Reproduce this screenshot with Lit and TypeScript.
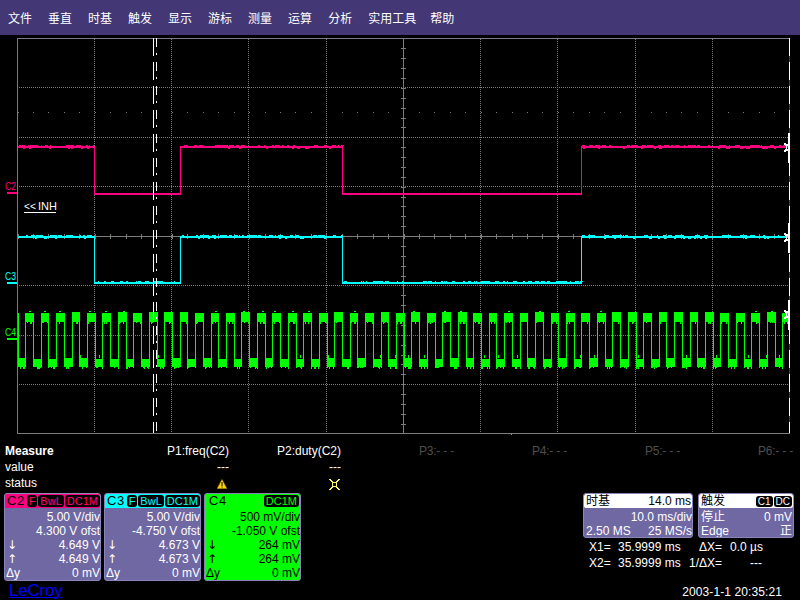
import { LitElement, html, css, svg } from 'lit';
import { customElement } from 'lit/decorators.js';

const X0 = 17.5;
const X1 = 789.5;
const Y0 = 38.5;
const Y1 = 433.5;
const CX = 403.5;
const CY = 236.5;
const VERT = [94.5, 171.5, 248.5, 326.5, 480.5, 557.5, 635.5, 712.5];
const HORZ = [87.5, 137.5, 186.5, 285.5, 335.5, 384.5];
const EDGES = [94, 180, 342, 581];

// small seeded generator so the trace noise stays the same on every load
let seed = 7;
const rnd = () => {
  seed = (seed * 16807) % 2147483647;
  return seed / 2147483647;
};

// thin steps between the levels
const steps = (high: number, low: number) => {
  let d = '';
  let from = high;
  for (const x of EDGES) {
    const to = from === high ? low : high;
    d += `M${x + 0.5} ${from}V${to}`;
    from = to;
  }
  return d;
};

// the flat parts are two pixels thick
const flats = (high: number, low: number) => {
  let d = '';
  let x = 18;
  let level = high;
  for (const e of [...EDGES, 789]) {
    d += `M${x} ${level}H${e + 1}`;
    x = e;
    level = level === high ? low : high;
  }
  return d;
};

const levelAt = (x: number) => {
  let n = 0;
  for (const e of EDGES) if (x >= e) n++;
  return n % 2 === 0;
};

// flecks along the trace: above and below on high, optional on low
const noise = (high: number, low: number, lowToo: boolean) => {
  let d = '';
  for (let x = 19; x < 786; x += 1) {
    const isHigh = levelAt(x);
    if (!isHigh && !lowToo) continue;
    const y = isHigh ? high : low;
    const r = rnd();
    if (r < 0.2) {
      const w = 1 + Math.floor(rnd() * 4);
      d += `M${x} ${y - 2}h${w}v1h${-w}z`;
    } else if (r < 0.27 && isHigh) {
      d += `M${x} ${y + 1}h2v1h-2z`;
    }
  }
  return d;
};

const digital = () => {
  const period = 15.45;
  let line = 'M18.5 313V366';
  let fill = '';
  for (let i = 0; i < 50; i++) {
    const lowX = 17.5 + i * period;
    if (lowX > 788) break;
    const x = Math.round(lowX);
    const hx = Math.round(lowX + 7.7);
    const nx = Math.round(lowX + period);
    const lowTop = 358 + Math.round(rnd() * 1.1);
    const highTop = 312 + Math.round(rnd() * 1.1);
    const lw = Math.min(hx + 1 - x, 789 - x);
    fill += `M${x} ${lowTop}h${lw}v${367 - lowTop}h${-lw}z`;
    for (let k = 0; k < 4; k++) {
      const sx = x + Math.floor(rnd() * lw);
      fill += `M${sx} 367h1v${1 + Math.floor(rnd() * 2)}h-1z`;
    }
    if (rnd() < 0.6) fill += `M${x + Math.floor(rnd() * lw)} 355h1v3h-1z`;
    if (hx < 788) {
      const w = Math.min(nx + 1 - hx, 789 - hx);
      line += `M${hx + 0.5} 320V360`;
      if (nx < 789) line += `M${nx + 0.5} 320V360`;
      fill += `M${hx} ${highTop}h${w}v${322 - highTop}h${-w}z`;
      for (let k = 0; k < 3; k++) {
        const sx = hx + Math.floor(rnd() * w);
        fill += `M${sx} 322h1v${1 + Math.floor(rnd() * 2)}h-1z`;
      }
      if (rnd() < 0.6) fill += `M${hx + 2 + Math.floor(rnd() * 4)} 311h2v1h-2z`;
    }
  }
  return { line, fill };
};

const c4 = digital();
const c2Noise = noise(147, 194, false);
const c3Noise = noise(237, 283, true);

const range = (from: number, to: number) => {
  const out: number[] = [];
  for (let v = from; v <= to; v += 1) out.push(v);
  return out;
};

const tickX = range(0, 49).map((i) => Math.round(X0 + i * 15.44) + 0.5);
const tickY = range(1, 39).map((i) => Math.round(Y0 + i * 9.875) + 0.5);

const marker = (y: number) => svg`
  <path class="mark" d="M788 ${y - 14}h2v30h-2zM784 ${y - 4}h2v1h2v2h-1v3h1v2h-2v1h-2l1-3h1v-3h-1z" />
`;

@customElement('scope-plot')
export class ScopePlot extends LitElement {
  static styles = css`
    :host {
      display: block;
      height: 400px;
    }

    svg {
      display: block;
      width: 800px;
      height: 400px;
      shape-rendering: crispEdges;
    }

    text {
      font-family: 'Liberation Sans', sans-serif;
      font-size: 11px;
    }

    line,
    path {
      fill: none;
    }

    .dot {
      stroke: #7c7c7c;
      stroke-dasharray: 1 1;
    }

    .solid {
      stroke: #7c7c7c;
    }

    .pip {
      fill: #7c7c7c;
    }

    .cursor {
      stroke: #fff;
    }

    .rail {
      stroke: #444;
    }

    .mark {
      fill: #fff;
    }

    .c2 {
      stroke: #ff0080;
    }

    .c3 {
      stroke: #00ffff;
    }

    .c4 {
      stroke: #00ff00;
    }

    .thick {
      stroke-width: 2;
    }

    .fill2 {
      fill: #ff0080;
    }

    .fill3 {
      fill: #00ffff;
    }

    .fill4 {
      fill: #00ff00;
    }
  `;

  render() {
    return html`
      <svg viewBox="0 35 800 400">
        ${HORZ.map((y) => svg`<line class="dot" x1="19" x2="788" y1=${y} y2=${y}></line>`)}
        ${VERT.map((x) => svg`<line class="dot" x1=${x} x2=${x} y1="39" y2="433"></line>`)}
        ${tickX
          .filter((x) => !VERT.includes(x) && Math.abs(x - CX) > 2)
          .map((x) => svg`<path class="pip" d="M${x - 0.5} 112h1v1h-1z"></path>`)}
        ${tickX.map((x) => svg`<line class="solid" x1=${x} x2=${x} y1="234" y2="239"></line>`)}
        ${tickY.map((y) => svg`<line class="solid" x1="401" x2="406" y1=${y} y2=${y}></line>`)}
        <line class="solid" x1=${X0} x2=${X1} y1=${CY} y2=${CY}></line>
        <line class="solid" x1=${CX} x2=${CX} y1=${Y0} y2=${Y1}></line>
        <path class="solid" d="M${X0} ${Y1}V${Y0}H${X1}M${X0} ${Y1}H${X1}" />

        <path class="c2" d=${steps(147, 194)} />
        <path class="c2 thick" d=${flats(147, 194)} />
        <path class="fill2" d=${c2Noise} />
        <path class="c3" d=${steps(237, 283)} />
        <path class="c3 thick" d=${flats(237, 283)} />
        <path class="fill3" d=${c3Noise} />
        <path class="fill4" d=${c4.fill} />
        <path class="c4" d=${c4.line} />

        <line class="cursor" x1="153.5" x2="153.5" y1="38" y2="433" stroke-dasharray="18 6"></line>
        <line class="cursor" x1="156.5" x2="156.5" y1="38" y2="433" stroke-dasharray="9 6 2 7"></line>

        <line class="rail" x1="789.5" x2="789.5" y1="38" y2="433"></line>
        <line class="cursor" x1="789.5" x2="789.5" y1="38" y2="433" stroke-dasharray="18 6"></line>
        ${marker(147)} ${marker(237)} ${marker(314)}

        <text x="5" y="190" fill="#ff0080" textLength="11" lengthAdjust="spacingAndGlyphs">C2</text>
        <path class="fill2" d="M7 192h10v2h-10z" />
        <text x="5" y="280" fill="#00ffff" textLength="11" lengthAdjust="spacingAndGlyphs">C3</text>
        <path class="fill3" d="M7 282h10v2h-10z" />
        <text x="5" y="336" fill="#00ff00" textLength="11" lengthAdjust="spacingAndGlyphs">C4</text>
        <path class="fill4" d="M7 338h10v2h-10z" />

        <text x="24" y="210" fill="#fff" textLength="12" lengthAdjust="spacingAndGlyphs">&lt;&lt;</text>
        <text x="38" y="210" fill="#fff">INH</text>
        <line class="cursor" x1="24" x2="56" y1="212.5" y2="212.5"></line>

        <path class="fill4" d="M511 434h1v2h1v2h2v4h-7v-4h2v-2h1z" />
      </svg>
    `;
  }
}

@customElement('channel-card')
export class ChannelCard extends LitElement {
  static properties = {
    name: {},
    tags: { type: Array },
    rows: { type: Array },
    variant: {},
  };

  name = '';
  tags: string[] = [];
  rows: string[][] = [];
  variant = 'c2';

  static styles = css`
    :host {
      display: block;
      width: 97px;
      height: 88px;
    }

    .card {
      box-sizing: border-box;
      height: 100%;
      background: #6f68a3;
      border-radius: 3px;
      border: 1px solid #8a84b8;
      color: #fff;
      font: 12px/14px 'Liberation Sans', sans-serif;
      display: flex;
      flex-direction: column;
      overflow: hidden;
    }

    .head {
      display: flex;
      align-items: center;
      flex: none;
      height: 14px;
      padding: 0 1px 0 2px;
      color: #000;
      gap: 1px;
      margin-bottom: 2px;
    }

    .name {
      font-size: 13px;
      letter-spacing: 0.5px;
    }

    .spacer {
      flex: 1;
    }

    .tag {
      background: #000;
      border-radius: 3px;
      height: 12px;
      line-height: 12px;
      padding: 0 2px;
      font-size: 11px;
    }

    .c2 .head {
      background: #ff0080;
    }

    .c2 .tag {
      color: #ff0080;
    }

    .c3 .head {
      background: #00ffff;
    }

    .c3 .tag {
      color: #00ffff;
    }

    .c4 {
      background: #00ff00;
      color: #000;
    }

    .c4 .head {
      background: #00ff00;
    }

    .c4 .name {
      padding-left: 2px;
    }

    .c4 .tag {
      color: #00ff00;
    }

    .row {
      display: flex;
      flex: none;
      justify-content: space-between;
      height: 14px;
      padding: 0 0 0 1px;
      white-space: nowrap;
    }

    .arrow {
      font: 12px/14px 'DejaVu Sans', sans-serif;
      padding-left: 1px;
    }
  `;

  render() {
    return html`
      <div class="card ${this.variant}">
        <div class="head">
          <span class="name">${this.name}</span>
          <span class="spacer"></span>
          ${this.tags.map((t) => html`<span class="tag">${t}</span>`)}
        </div>
        ${this.rows.map(
          (r) => html`<div class="row">
            <span class=${r[0] === 'Δy' ? '' : 'arrow'}>${r[0]}</span><span>${r[1]}</span>
          </div>`,
        )}
      </div>
    `;
  }
}

@customElement('app-root')
export class AppRoot extends LitElement {
  static styles = css`
    :host {
      display: block;
      width: 800px;
      height: 600px;
      background: #000;
      color: #fff;
      font: 12px/14px 'Liberation Sans', 'Noto Sans CJK SC', sans-serif;
      overflow: hidden;
    }

    .menu {
      display: flex;
      align-items: center;
      height: 35px;
      background: #433875;
      padding-left: 8px;
      gap: 16px;
    }

    .menu span {
      font: 12px 'Noto Sans CJK SC', sans-serif;
    }

    .menu span:last-child {
      margin-left: -2px;
    }

    .measure {
      display: grid;
      grid-template-columns: 54px 170px 112px 113px 113px 113px 113px;
      grid-template-rows: repeat(3, 16px);
      box-sizing: border-box;
      height: 58px;
      padding: 9px 0 0 5px;
    }

    .measure b {
      font-size: 12px;
    }

    .cell {
      text-align: right;
      white-space: nowrap;
    }

    .off {
      color: #4f4f4f;
      letter-spacing: -0.2px;
    }

    .icon {
      display: flex;
      justify-content: flex-end;
      align-items: center;
    }

    .warn {
      padding-right: 2px;
    }

    .fault {
      padding-right: 1px;
    }

    .lower {
      display: grid;
      grid-template-columns: 1fr 217px;
    }

    .cards {
      display: flex;
      gap: 3px;
      padding-left: 4px;
    }

    .logo {
      color: #0000ff;
      font: 17px/18px 'Liberation Sans', sans-serif;
      text-decoration: underline;
      padding: 1px 0 0 9px;
      letter-spacing: -0.2px;
    }

    .boxes {
      display: flex;
      gap: 5px;
    }

    .box {
      box-sizing: border-box;
      height: 45px;
      background: #6f68a3;
      border: 1px solid #8a84b8;
      border-radius: 3px;
      overflow: hidden;
    }

    .time {
      width: 110px;
    }

    .trig {
      width: 96px;
    }

    .title {
      display: flex;
      justify-content: space-between;
      align-items: center;
      height: 14px;
      background: #fff;
      color: #000;
      padding: 0 1px 0 2px;
      border-radius: 2px;
      margin-bottom: 2px;
    }

    .row {
      display: flex;
      justify-content: space-between;
      height: 14px;
      padding: 0 0 0 2px;
      white-space: nowrap;
    }

    .trig .row {
      padding-right: 1px;
    }

    .badge {
      background: #000;
      color: #fff;
      border-radius: 3px;
      font-size: 10px;
      line-height: 12px;
      padding: 0 2px;
      margin-left: 1px;
    }

    .cursors {
      display: grid;
      grid-template-columns: 29px 63px 41px 40px;
      grid-template-rows: 16px 16px;
      padding: 1px 0 0 6px;
      line-height: 16px;
      white-space: nowrap;
    }

    .num {
      text-align: right;
    }

    .val {
      padding-left: 8px;
    }

    .dash {
      display: inline-block;
      width: 32px;
      text-align: right;
    }

    .stamp {
      text-align: right;
      padding: 14px 18px 0 0;
      letter-spacing: 0.1px;
    }
  `;

  private menu = ['文件', '垂直', '时基', '触发', '显示', '游标', '测量', '运算', '分析', '实用工具', '帮助'];

  private warn = svg`<svg width="10" height="10" viewBox="0 0 10 10">
    <path d="M5 .5L9.8 9.5H.2z" fill="#ffd800" stroke="#b88a00" stroke-width=".6"/>
    <path d="M4.5 3h1v4h-1zM4.5 7.6h1v1h-1z" fill="#000"/>
  </svg>`;

  private fault = svg`<svg width="11" height="11" viewBox="0 0 11 11" shape-rendering="crispEdges">
    <path d="M0 0h2v1h1v1h1v1h3V2h1V1h1V0h2v1h-1v1H9v1H8v5h1v1h1v1h1v1H9v-1H8V9H7V8H4v1H3v1H2v1H0v-1h1V9h1V8h1V3H2V2H1V1H0z" fill="#fff46e"/>
    <path d="M4 4h3v3H4z" fill="#000"/>
  </svg>`;

  render() {
    return html`
      <nav class="menu">${this.menu.map((m) => html`<span>${m}</span>`)}</nav>
      <scope-plot></scope-plot>
      <div class="measure">
        <b>Measure</b>
        <span class="cell">P1:freq(C2)</span>
        <span class="cell">P2:duty(C2)</span>
        <span class="cell off">P3:- - -</span>
        <span class="cell off">P4:- - -</span>
        <span class="cell off">P5:- - -</span>
        <span class="cell off">P6:- - -</span>
        <span>value</span>
        <span class="cell">---</span>
        <span class="cell">---</span>
        <span></span><span></span><span></span><span></span>
        <span>status</span>
        <span class="cell icon warn">${this.warn}</span>
        <span class="cell icon fault">${this.fault}</span>
      </div>
      <div class="lower">
        <div>
          <div class="cards">
            <channel-card
              variant="c2"
              name="C2"
              .tags=${['F', 'BwL', 'DC1M']}
              .rows=${[
                ['', '5.00 V/div'],
                ['', '4.300 V ofst'],
                ['↓', '4.649 V'],
                ['↑', '4.649 V'],
                ['Δy', '0 mV'],
              ]}
            ></channel-card>
            <channel-card
              variant="c3"
              name="C3"
              .tags=${['F', 'BwL', 'DC1M']}
              .rows=${[
                ['', '5.00 V/div'],
                ['', '-4.750 V ofst'],
                ['↓', '4.673 V'],
                ['↑', '4.673 V'],
                ['Δy', '0 mV'],
              ]}
            ></channel-card>
            <channel-card
              variant="c4"
              name="C4"
              .tags=${['DC1M']}
              .rows=${[
                ['', '500 mV/div'],
                ['', '-1.050 V ofst'],
                ['↓', '264 mV'],
                ['↑', '264 mV'],
                ['Δy', '0 mV'],
              ]}
            ></channel-card>
          </div>
          <div class="logo">LeCroy</div>
        </div>
        <div>
          <div class="boxes">
            <div class="box time">
              <div class="title"><span>时基</span><span>14.0 ms</span></div>
              <div class="row"><span></span><span>10.0 ms/div</span></div>
              <div class="row"><span>2.50 MS</span><span>25 MS/s</span></div>
            </div>
            <div class="box trig">
              <div class="title"><span>触发</span><span><span class="badge">C1</span><span class="badge">DC</span></span></div>
              <div class="row"><span>停止</span><span>0 mV</span></div>
              <div class="row"><span>Edge</span><span>正</span></div>
            </div>
          </div>
          <div class="cursors">
            <span>X1=</span><span>35.9999 ms</span><span class="num">ΔX=</span><span class="val">0.0 µs</span>
            <span>X2=</span><span>35.9999 ms</span><span class="num">1/ΔX=</span><span class="val"><span class="dash">---</span></span>
          </div>
          <div class="stamp">2003-1-1 20:35:21</div>
        </div>
      </div>
    `;
  }
}
